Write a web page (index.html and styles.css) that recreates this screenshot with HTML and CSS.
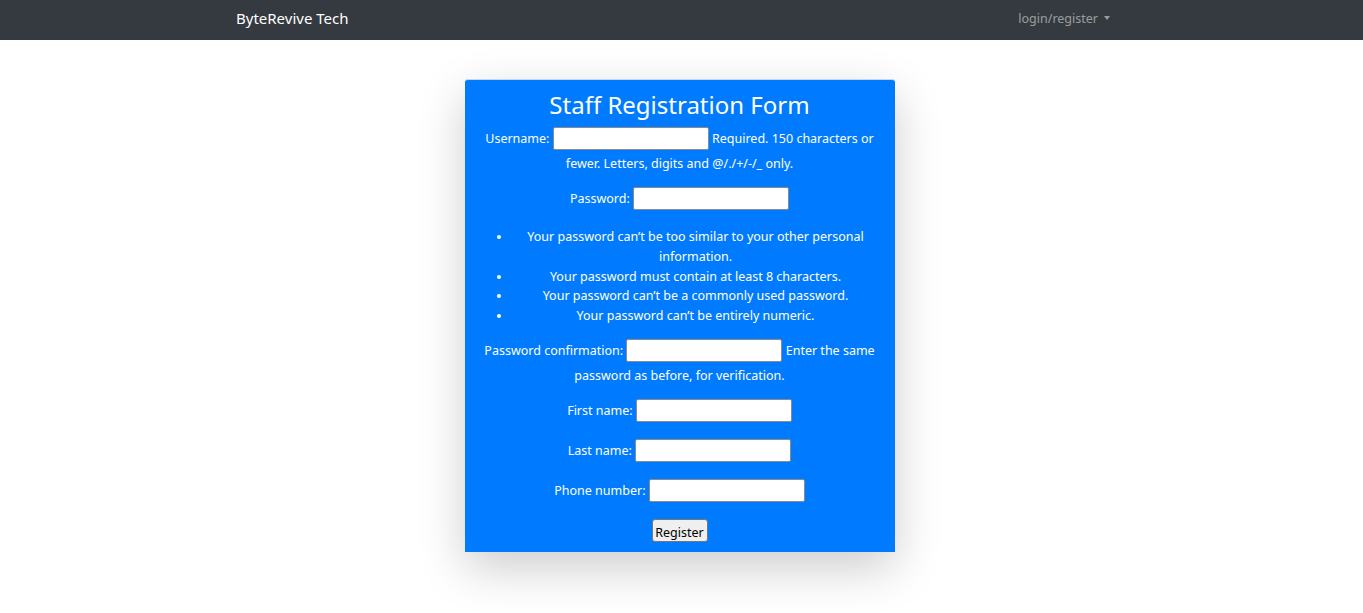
FILE: index.html
```html
<!DOCTYPE html>
<html lang="en">
<head>
<meta charset="utf-8">
<title>Staff Registration</title>
<link rel="stylesheet" href="styles.css">
</head>
<body>
<nav class="navbar">
  <div class="nav-inner">
    <a class="brand" href="#">ByteRevive Tech</a>
    <a class="nav-link" href="#">login/register<span class="caret"></span></a>
  </div>
</nav>
<main class="page">
  <div class="card">
    <h3 class="title">Staff Registration Form</h3>
    <form class="form">
      <p class="field field-help"><label>Username:</label> <input class="inp" type="text"> <span class="helptext">Required. 150 characters or fewer. Letters, digits and @/./+/-/_ only.</span></p>
      <p class="field field-tight"><label>Password:</label> <input class="inp" type="password"></p>
      <ul class="rules">
        <li>Your password can’t be too similar to your other personal information.</li>
        <li>Your password must contain at least 8 characters.</li>
        <li>Your password can’t be a commonly used password.</li>
        <li>Your password can’t be entirely numeric.</li>
      </ul>
      <p class="field field-help"><label>Password confirmation:</label> <input class="inp" type="password"> <span class="helptext">Enter the same password as before, for verification.</span></p>
      <p class="field"><label>First name:</label> <input class="inp" type="text"></p>
      <p class="field"><label>Last name:</label> <input class="inp" type="text"></p>
      <p class="field"><label>Phone number:</label> <input class="inp" type="text"></p>
      <p class="field field-last"><button class="btn" type="button">Register</button></p>
    </form>
  </div>
</main>
</body>
</html>
```
FILE: styles.css
```css
* { box-sizing: border-box; }
html, body { margin: 0; padding: 0; }
body {
  font-family: "Noto Sans", "Open Sans", sans-serif;
  background: #fff;
  color: #212529;
  min-height: 100vh;
}
.navbar {
  height: 40px;
  background: #343a40;
}
.nav-inner {
  width: 891px;
  margin: 0 auto;
  height: 40px;
  padding-bottom: 4px;
  display: flex;
  align-items: center;
  justify-content: space-between;
}
.brand {
  color: #fff;
  text-decoration: none;
  font-size: 15px;
}
.nav-link {
  color: rgba(255,255,255,0.5);
  text-decoration: none;
  font-size: 12.5px;
  padding: 0 17px 0 8px;
  display: flex;
  align-items: center;
}
.caret {
  display: inline-block;
  margin-left: 6px;
  width: 0;
  height: 0;
  border-top: 4px solid rgba(255,255,255,0.5);
  border-left: 3.5px solid transparent;
  border-right: 3.5px solid transparent;
}
.page {
  min-height: calc(100vh - 40px);
  padding: 39px 4px 0 0;
  display: flex;
  justify-content: center;
  align-items: flex-start;
}
.card {
  width: 430px;
  background: #007bff;
  color: #fff;
  border-radius: 3px 3px 0 0;
  border-top: 1px solid #c9d6e6;
  padding: 8px 15px 9px;
  text-align: center;
  box-shadow: 0 16px 48px rgba(0,0,0,0.2);
}
.title {
  margin: 0;
  font-size: 24px;
  font-weight: 400;
  line-height: 34px;
}
.form { margin: 4px 0 0; font-size: 12.5px; }
.field {
  margin: 0 0 15px;
  line-height: 25px;
}
.field-help { margin-bottom: 10px; }
.field-tight { margin-bottom: 16px; }
.field-last { margin-bottom: 0; }
.inp {
  width: 156px;
  height: 23px;
  margin-top: 1px;
  border: 1px solid #8a8a8a;
  border-radius: 2px;
  background: #fff;
  vertical-align: top;
  padding: 1px 2px;
  font: inherit;
}
.rules {
  margin: 0 0 12px;
  padding-left: 32px;
  line-height: 19.75px;
}
.btn {
  width: 56px;
  height: 23px;
  margin-top: 1px;
  font: inherit;
  color: #000;
  background: #efefef;
  border: 1px solid #767676;
  border-radius: 3px;
  padding: 0;
  vertical-align: top;
}
```
